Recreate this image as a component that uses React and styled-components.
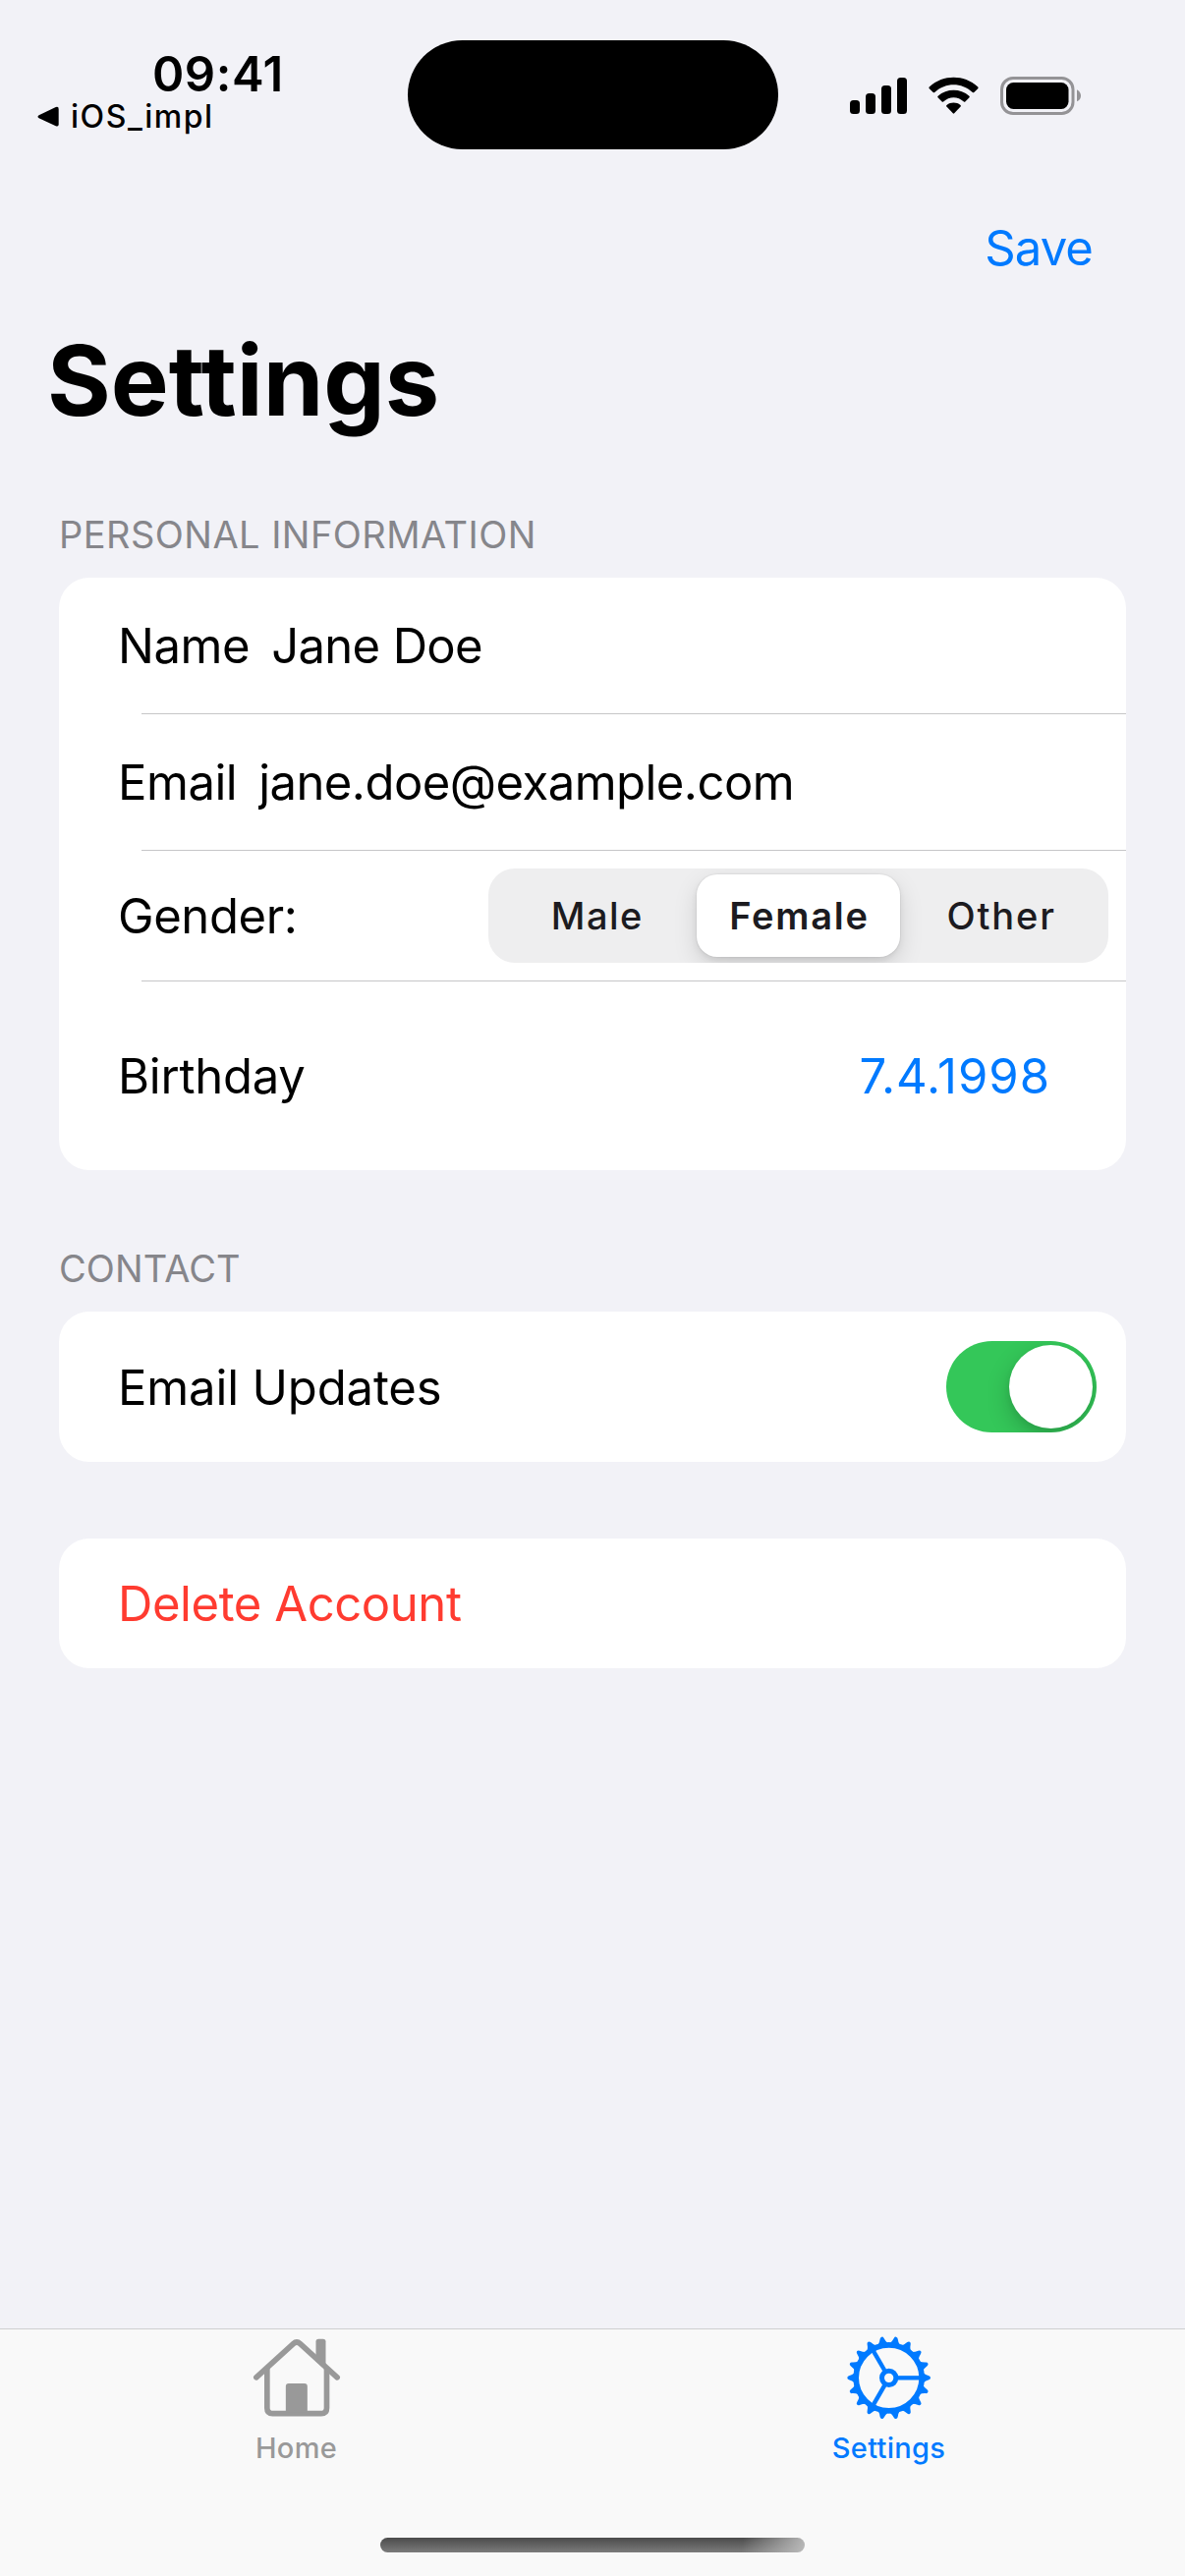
import React, { useState } from "react";
import styled, { createGlobalStyle, css } from "styled-components";

const GlobalStyle = createGlobalStyle`
  *, *::before, *::after { box-sizing: border-box; }
  body {
    margin: 0;
    background: #f2f2f7;
    font-family: Inter, "Liberation Sans", sans-serif;
    color: #000;
  }
  button, input {
    font: inherit;
    color: inherit;
    border: 0;
    padding: 0;
    background: none;
    letter-spacing: inherit;
  }
`;

const Screen = styled.div`
  display: flex;
  flex-direction: column;
  width: 1206px;
  height: 2622px;
  overflow: hidden;
  background: #f2f2f7;
`;

/* ---------- status bar ---------- */

const StatusBar = styled.header`
  display: grid;
  grid-template-columns: 414px 378px 414px;
  height: 186px;
  flex: none;
`;

const StatusLeft = styled.div`
  display: flex;
  flex-direction: column;
  padding-top: 46px;
`;

const Clock = styled.time`
  padding-left: 155px;
  font-size: 49px;
  font-weight: 600;
  line-height: 60px;
  letter-spacing: 0.53px;
`;

const BackLink = styled.div`
  display: flex;
  align-items: center;
  gap: 11px;
  height: 26px;
  padding-left: 38px;
  font-size: 32px;
  font-weight: 500;
  line-height: 26px;
  letter-spacing: 1.54px;
`;

const BackTriangle = styled.svg`
  width: 23px;
  height: 22px;
`;

const Island = styled.div`
  height: 111px;
  margin: 41px 0.5px 0;
  border-radius: 56px;
  background: #000;
`;

const StatusRight = styled.div`
  display: flex;
  align-items: flex-start;
  padding: 78px 0 0 73px;
`;

const SignalBars = styled.div`
  display: flex;
  align-items: flex-end;
  gap: 6px;
  height: 38px;
`;

const Bar = styled.span`
  width: 10px;
  height: ${(p) => p.$height}px;
  border-radius: 3.5px;
  background: #000;
`;

const WifiIcon = styled.svg`
  width: 52px;
  height: 39px;
  margin-left: 22px;
`;

const BatteryIcon = styled.svg`
  width: 84px;
  height: 39px;
  margin-left: 21px;
`;

/* ---------- navigation ---------- */

const NavBar = styled.nav`
  display: flex;
  justify-content: flex-end;
  align-items: center;
  height: 132px;
  padding: 2px 94px 0 0;
  flex: none;
`;

const SaveButton = styled.button`
  color: #007aff;
  font-size: 49px;
  line-height: 60px;
  letter-spacing: -0.9px;
`;

const Title = styled.h1`
  margin: 9px 0 0;
  padding-left: 48px;
  font-size: 99px;
  font-weight: 700;
  line-height: 120px;
  letter-spacing: 0;
`;

/* ---------- grouped list ---------- */

const Form = styled.main`
  flex: 1;
  padding: 73px 60px 0;
`;

const Section = styled.section`
  margin-top: ${(p) => p.$gap || 0}px;
`;

const SectionHeader = styled.h2`
  margin: 0 0 20px;
  color: #86868b;
  font-size: 38px;
  font-weight: 400;
  line-height: 48px;
  letter-spacing: ${(p) => p.$track}px;
  text-transform: uppercase;
`;

const Card = styled.div`
  border-radius: 31px;
  background: #fff;
  overflow: hidden;
`;

const Separator = styled.hr`
  height: 1px;
  margin: 0 0 0 84px;
  border: 0;
  background: #c6c6c8;
`;

const Row = styled.div`
  display: flex;
  align-items: center;
  justify-content: ${(p) => (p.$spread ? "space-between" : "flex-start")};
  gap: 22px;
  height: ${(p) => p.$height}px;
  padding-left: 60px;
  padding-right: ${(p) => p.$right || 0}px;
  font-size: 49px;
  line-height: 60px;
`;

const Text = styled.span`
  padding-top: 2px;
  letter-spacing: ${(p) => p.$track}px;
  white-space: nowrap;
  color: ${(p) => p.$color || "#000"};
`;

const TextInput = styled.input`
  flex: 1;
  min-width: 0;
  height: 66px;
  outline: none;
  letter-spacing: ${(p) => p.$track}px;
`;

const DeleteButton = styled.button`
  padding-top: 2px;
  color: #ff3b30;
  letter-spacing: -0.42px;
`;

/* ---------- segmented control ---------- */

const Segmented = styled.div`
  display: flex;
  width: 631px;
  height: 96px;
  padding: 6px 7px;
  border-radius: 27px;
  background: #eeeeef;
  overflow: hidden;
`;

const Segment = styled.button`
  flex: 1;
  margin: 0 -1px;
  border-radius: 21px;
  color: #1c1b20;
  font-size: 38px;
  font-weight: 500;
  letter-spacing: ${(p) => p.$track}px;
  text-indent: 2px;
  ${(p) =>
    p.$selected &&
    css`
      background: #fff;
      font-weight: 600;
      box-shadow: 0 9px 24px rgba(0, 0, 0, 0.13), 0 3px 6px rgba(0, 0, 0, 0.07),
        0 0 1px 1px rgba(0, 0, 0, 0.04);
    `}
`;

/* ---------- switch ---------- */

const Switch = styled.button`
  display: flex;
  justify-content: ${(p) => (p.$on ? "flex-end" : "flex-start")};
  align-items: center;
  width: 153px;
  height: 93px;
  padding: 0 4px;
  border-radius: 47px;
  background: ${(p) => (p.$on ? "#34c759" : "#e9e9ea")};
  overflow: hidden;
`;

const Knob = styled.span`
  width: 85px;
  height: 85px;
  border-radius: 50%;
  background: #fff;
  box-shadow: 0 9px 24px rgba(0, 0, 0, 0.2), 0 3px 6px rgba(0, 0, 0, 0.06);
`;

/* ---------- tab bar ---------- */

const TabBar = styled.footer`
  display: flex;
  flex-direction: column;
  align-items: center;
  justify-content: space-between;
  flex: none;
  height: 252px;
  padding-bottom: 24px;
  border-top: 1px solid #cfcfd0;
  background: #f9f9f9;
`;

const Tabs = styled.div`
  display: flex;
  width: 100%;
`;

const Tab = styled.button`
  flex: 1;
  display: flex;
  flex-direction: column;
  align-items: center;
  gap: 8px;
  padding-top: 4px;
  color: ${(p) => (p.$active ? "#007aff" : "#999")};
  font-size: 29px;
  font-weight: 500;
  line-height: 37px;
  letter-spacing: 0.3px;
`;

const TabIcon = styled.svg`
  width: 90px;
  height: 90px;
`;

const HomeIndicator = styled.div`
  width: 432px;
  height: 15px;
  border-radius: 8px;
  background: linear-gradient(100deg, rgba(185, 185, 185, 0) 85%, rgba(190, 190, 190, 0.95) 100%),
    linear-gradient(180deg, #4b4b4b, #7b7b7b);
`;

function HomeIcon() {
  return (
    <TabIcon viewBox="109.5 75 270 270" fill="none" aria-hidden="true">
      <path
        d="M121 209.500L234 107Q244.500 97.500 255 107L368 209.500"
        stroke="currentColor"
        strokeWidth="17"
        strokeLinecap="round"
        strokeLinejoin="round"
      />
      <path
        d="M154 182V303Q154 320 171 320H319Q336 320 336 303V182"
        stroke="currentColor"
        strokeWidth="17"
      />
      <path d="M303 160V100Q303 92 311 92H325Q333 92 333 100V178L322 178Z" fill="currentColor" />
      <path d="M211 316V237Q211 228 220 228H268Q277 228 277 237V316Z" fill="currentColor" />
    </TabIcon>
  );
}

const TEETH = Array.from({ length: 18 }, (_, i) => i * 20);
const SPOKES = [0, 120, 240];

function GearIcon() {
  return (
    <TabIcon viewBox="119.5 75 270 270" fill="none" aria-hidden="true">
      <g transform="translate(253.500 211)">
        <circle r="100.500" stroke="currentColor" strokeWidth="17" />
        <circle r="21.500" stroke="currentColor" strokeWidth="15" />
        {SPOKES.map((angle) => (
          <path
            key={angle}
            d="M27 0H98"
            stroke="currentColor"
            strokeWidth="13"
            transform={`rotate(${angle})`}
          />
        ))}
        {TEETH.map((angle) => (
          <path
            key={angle}
            d="M104 -16Q112 -9 122 -6Q127 -4.500 127 0Q127 4.500 122 6Q112 9 104 16Z"
            fill="currentColor"
            transform={`rotate(${angle})`}
          />
        ))}
      </g>
    </TabIcon>
  );
}

function StatusIcons() {
  return (
    <StatusRight>
      <SignalBars>
        {[14, 21, 29, 37].map((h) => (
          <Bar key={h} $height={h} />
        ))}
      </SignalBars>
      <WifiIcon viewBox="0 0 52 39" fill="none" aria-hidden="true">
        <path
          d="M.8 12.300Q-.1 11.200 1 10.200C15 -2.400 36 -2.400 50 10.200Q51.100 11.200 50.200 12.300L46.300 16Q45.600 16.700 44.800 16C33.500 5.700 17.500 5.700 6.200 16Q5.400 16.700 4.700 16Z"
          fill="#000"
        />
        <path
          d="M9.500 21.300Q8.800 20.500 9.600 19.700C18.800 11.800 32.200 11.800 41.400 19.700Q42.200 20.500 41.500 21.300L37.300 25.400Q36.600 26 35.900 25.400C29.700 19.700 21.300 19.700 15.100 25.400Q14.400 26 13.700 25.400Z"
          fill="#000"
        />
        <path
          d="M18.400 30.600Q17.600 29.700 18.500 28.900C22.600 25.700 28.400 25.700 32.500 28.900Q33.400 29.700 32.600 30.600L26.200 37.300Q25.500 38 24.800 37.300Z"
          fill="#000"
        />
      </WifiIcon>
      <BatteryIcon viewBox="0 0 84 39" fill="none" aria-hidden="true">
        <rect x="1.500" y="1.500" width="72.500" height="36" rx="11.500" stroke="#949396" strokeWidth="3" />
        <rect x="6" y="6" width="63.500" height="27" rx="7.500" fill="#000" />
        <path d="M78 13.200Q82 15.500 82 19.500Q82 23.500 78 25.300Z" fill="#949396" />
      </BatteryIcon>
    </StatusRight>
  );
}

const GENDERS = [
  { label: "Male", track: 1.5 },
  { label: "Female", track: 1.75 },
  { label: "Other", track: 1.9 },
];

export default function App() {
  const [name, setName] = useState("Jane Doe");
  const [email, setEmail] = useState("jane.doe@example.com");
  const [gender, setGender] = useState("Female");
  const [updates, setUpdates] = useState(true);

  return (
    <>
      <GlobalStyle />
      <Screen>
        <StatusBar>
          <StatusLeft>
            <Clock>09:41</Clock>
            <BackLink>
              <BackTriangle viewBox="0 0 23 22" aria-hidden="true">
                <path
                  d="M1.600 9.300L18.800 1Q21.700 0 21.700 3V18.500Q21.700 21.400 18.800 20.300L1.600 12.200Q-.6 10.800 1.600 9.300Z"
                  fill="#000"
                />
              </BackTriangle>
              iOS_impl
            </BackLink>
          </StatusLeft>
          <Island />
          <StatusIcons />
        </StatusBar>

        <NavBar>
          <SaveButton>Save</SaveButton>
        </NavBar>
        <Title>Settings</Title>

        <Form>
          <Section>
            <SectionHeader $track={0.46}>Personal Information</SectionHeader>
            <Card>
              <Row $height={138}>
                <Text $track={-0.45}>Name</Text>
                <TextInput $track={-0.65} value={name} onChange={(e) => setName(e.target.value)} />
              </Row>
              <Separator />
              <Row $height={138}>
                <Text $track={-0.5}>Email</Text>
                <TextInput $track={-0.54} value={email} onChange={(e) => setEmail(e.target.value)} />
              </Row>
              <Separator />
              <Row $height={132} $right={18} $spread>
                <Text $track={-0.4}>Gender:</Text>
                <Segmented>
                  {GENDERS.map(({ label, track }) => (
                    <Segment
                      key={label}
                      $track={track}
                      $selected={label === gender}
                      onClick={() => setGender(label)}
                    >
                      {label}
                    </Segment>
                  ))}
                </Segmented>
              </Row>
              <Separator />
              <Row $height={192} $right={77} $spread>
                <Text $track={-0.25}>Birthday</Text>
                <Text $track={1} $color="#007aff">
                  7.4.1998
                </Text>
              </Row>
            </Card>
          </Section>

          <Section $gap={76}>
            <SectionHeader $track={0.1}>Contact</SectionHeader>
            <Card>
              <Row $height={153} $right={30} $spread>
                <Text $track={-0.15}>Email Updates</Text>
                <Switch
                  role="switch"
                  aria-checked={updates}
                  aria-label="Email Updates"
                  $on={updates}
                  onClick={() => setUpdates(!updates)}
                >
                  <Knob />
                </Switch>
              </Row>
            </Card>
          </Section>

          <Section $gap={78}>
            <Card>
              <Row $height={132}>
                <DeleteButton>Delete Account</DeleteButton>
              </Row>
            </Card>
          </Section>
        </Form>

        <TabBar>
          <Tabs>
            <Tab>
              <HomeIcon />
              Home
            </Tab>
            <Tab $active>
              <GearIcon />
              Settings
            </Tab>
          </Tabs>
          <HomeIndicator />
        </TabBar>
      </Screen>
    </>
  );
}
